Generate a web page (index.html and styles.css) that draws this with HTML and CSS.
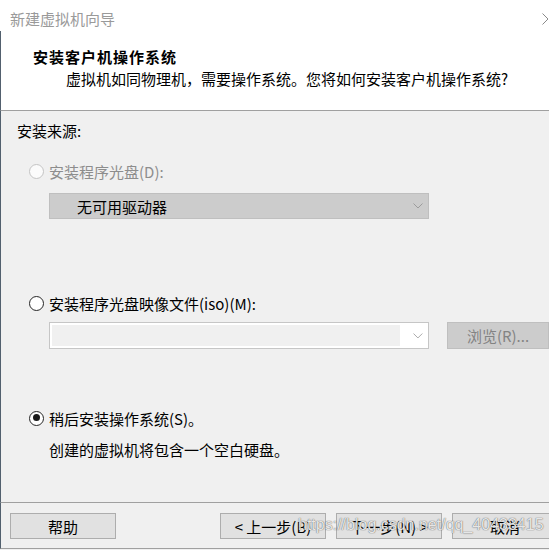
FILE: index.html
```html
<!DOCTYPE html>
<html lang="zh-CN">
<head>
  <meta charset="UTF-8" />
  <meta name="viewport" content="width=device-width, initial-scale=1.0" />
  <title>新建虚拟机向导</title>
  <link rel="stylesheet" href="styles.css">
</head>
<body>
  <div class="window">
    <div class="titlebar">
      新建虚拟机向导
      <svg class="close" width="7" height="12" viewBox="0 0 7 12"><polyline points="0.5,0.5 6,6 0.5,11.5" fill="none" stroke="#8a8a8a" stroke-width="1"/></svg>
    </div>

    <div class="header">
      <h1>安装客户机操作系统</h1>
      <p>虚拟机如同物理机，需要操作系统。您将如何安装客户机操作系统?</p>
    </div>

    <div class="content">
      <div class="label">安装来源:</div>

      <div class="option option-disc disabled"><span class="radio"></span>安装程序光盘(D):</div>
      <div class="select">
        <span class="select-text">无可用驱动器</span>
        <svg class="chevron" width="10" height="6" viewBox="0 0 10 6"><polyline points="0.5,0.5 5,5 9.5,0.5" fill="none" stroke="#9c9c9c" stroke-width="1"/></svg>
      </div>

      <div class="option option-iso"><span class="radio"></span>安装程序光盘映像文件(iso)(M):</div>
      <div class="file-row">
        <div class="combo">
          <span class="combo-field"></span>
          <svg class="chevron" width="10" height="6" viewBox="0 0 10 6"><polyline points="0.5,0.5 5,5 9.5,0.5" fill="none" stroke="#a8a8a8" stroke-width="1"/></svg>
        </div>
        <button class="btn btn-browse" disabled>浏览(R)...</button>
      </div>

      <div class="option option-later checked"><span class="radio"></span>稍后安装操作系统(S)。</div>
      <div class="note">创建的虚拟机将包含一个空白硬盘。</div>
    </div>

    <div class="footer">
      <button class="btn">帮助</button>
      <button class="btn btn-back">&lt; 上一步(B)</button>
      <button class="btn">下一步(N) &gt;</button>
      <button class="btn">取消</button>
    </div>

    <div class="watermark">https://blog.csdn.net/qq_40433415</div>
  </div>
</body>
</html>
```

FILE: styles.css
```css
body {
  margin: 0;
  background: #f0f0f0;
  font-family: "Noto Sans CJK SC", "Noto Sans", sans-serif;
  font-size: 15px;
  color: #000;
}
.window {
  position: relative;
  width: 549px;
  height: 550px;
  overflow: hidden;
  background: #f0f0f0;
}
.titlebar {
  position: relative;
  height: 31px;
  box-sizing: border-box;
  padding: 9px 0 0 10px;
  line-height: 20px;
  color: #9a9a9a;
  background: #fff;
}
.close {
  position: absolute;
  right: 0;
  top: 13px;
}
.header {
  background: #fff;
  border-left: 1px solid #52606e;
  border-bottom: 1px solid #a0a0a0;
  padding: 16px 0 21px 32px;
}
h1 {
  margin: 0;
  font-size: 15px;
  font-weight: bold;
  line-height: 20px;
  letter-spacing: 1px;
}
p {
  margin: 2px 0 0 33px;
  line-height: 20px;
}
.content {
  height: 391px;
  box-sizing: border-box;
  border-left: 1px solid #52606e;
  padding: 10px 0 0 16px;
}
.label {
  line-height: 20px;
}
.option {
  display: flex;
  align-items: center;
  height: 20px;
  margin-left: 12px;
}
.option-disc {
  margin-top: 20px;
}
.option-iso {
  margin-top: 74px;
}
.option-later {
  margin-top: 59px;
}
.option.disabled {
  color: #8d8d8d;
}
.radio {
  position: relative;
  width: 15px;
  height: 15px;
  box-sizing: border-box;
  border: 1px solid #262626;
  border-radius: 50%;
  background: #fff;
  margin-right: 5px;
  flex: none;
}
.disabled .radio {
  border-color: #c4c4c4;
  background: #fbfbfb;
}
.checked .radio {
  border-width: 1.5px;
}
.checked .radio::after {
  content: "";
  position: absolute;
  left: 2.5px;
  top: 2.5px;
  width: 7px;
  height: 7px;
  border-radius: 50%;
  background: #1a1a1a;
}
.select {
  display: flex;
  align-items: center;
  justify-content: space-between;
  width: 380px;
  height: 26px;
  box-sizing: border-box;
  margin: 12px 0 0 32px;
  padding: 0 5px 0 27px;
  background: #cccccc;
  border: 1px solid #bfbfbf;
}
.file-row {
  display: flex;
  margin: 9px 0 0 32px;
}
.combo {
  display: flex;
  align-items: center;
  width: 380px;
  height: 27px;
  box-sizing: border-box;
  padding: 2px 5px 2px 2px;
  background: #fff;
  border: 1px solid #c6c6c6;
}
.combo-field {
  align-self: stretch;
  width: 354px;
  margin-right: 13px;
  background: #f0f0f0;
}
.btn {
  flex: none;
  width: 106px;
  height: 26px;
  box-sizing: border-box;
  padding: 0;
  background: #e1e1e1;
  border: 1px solid #adadad;
  font-family: inherit;
  font-size: 15px;
  color: #000;
}
.btn-browse {
  width: 102px;
  height: 27px;
  margin-left: 18px;
  background: #cccccc;
  border-color: #bfbfbf;
  color: #838383;
}
.note {
  margin: 12px 0 0 32px;
  line-height: 20px;
}
.footer {
  display: flex;
  gap: 10px;
  height: 47px;
  box-sizing: border-box;
  border-left: 1px solid #52606e;
  border-top: 1px solid #a0a0a0;
  border-bottom: 1px solid #a0a0a0;
  padding: 10px 0 0 9px;
}
.btn-back {
  margin-left: 94px;
}
.watermark {
  position: absolute;
  left: 298px;
  top: 516px;
  font-family: "Liberation Sans", Arial, sans-serif;
  font-size: 16px;
  color: rgba(255, 255, 255, 0.85);
  text-shadow: 0 0 1px rgba(70, 70, 70, 0.8), 0 0 1px rgba(70, 70, 70, 0.5);
}
```
